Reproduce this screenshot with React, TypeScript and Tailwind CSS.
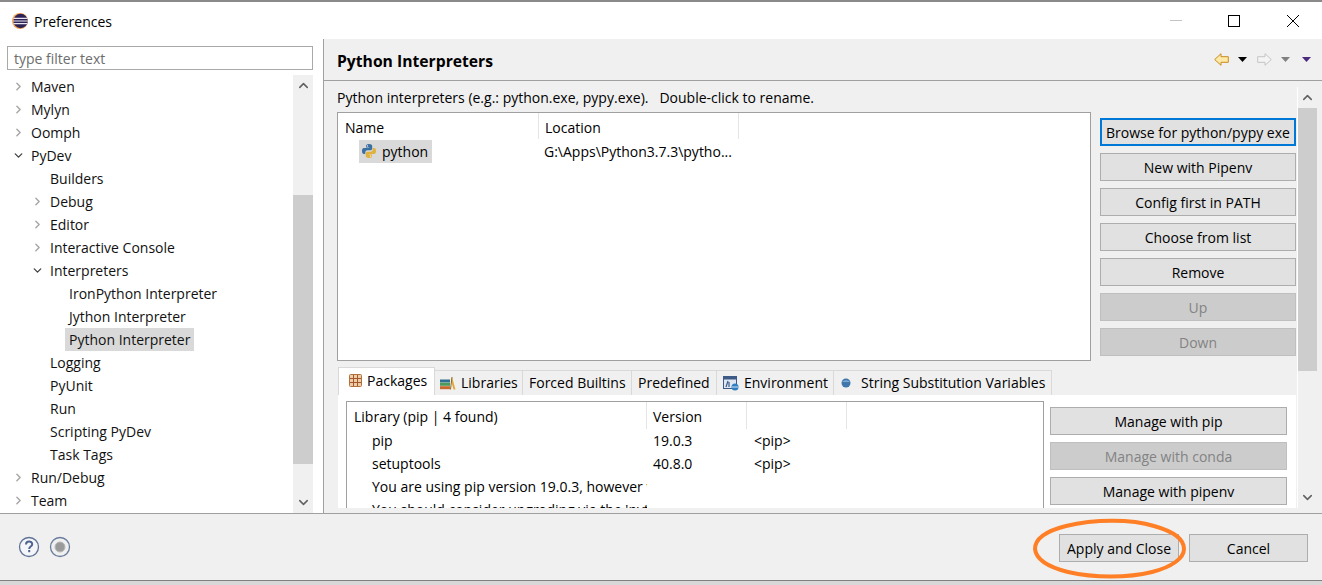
import { ChevronDown, ChevronRight, ChevronUp } from "lucide-react";
import type { ReactNode } from "react";

const FONT = "font-['Open_Sans','Liberation_Sans',sans-serif]";

type TreeRow = { label: string; depth: 0 | 1 | 2; arrow?: "closed" | "open"; selected?: boolean };

const tree: TreeRow[] = [
  { label: "Maven", depth: 0, arrow: "closed" },
  { label: "Mylyn", depth: 0, arrow: "closed" },
  { label: "Oomph", depth: 0, arrow: "closed" },
  { label: "PyDev", depth: 0, arrow: "open" },
  { label: "Builders", depth: 1 },
  { label: "Debug", depth: 1, arrow: "closed" },
  { label: "Editor", depth: 1, arrow: "closed" },
  { label: "Interactive Console", depth: 1, arrow: "closed" },
  { label: "Interpreters", depth: 1, arrow: "open" },
  { label: "IronPython Interpreter", depth: 2 },
  { label: "Jython Interpreter", depth: 2 },
  { label: "Python Interpreter", depth: 2, selected: true },
  { label: "Logging", depth: 1 },
  { label: "PyUnit", depth: 1 },
  { label: "Run", depth: 1 },
  { label: "Scripting PyDev", depth: 1 },
  { label: "Task Tags", depth: 1 },
  { label: "Run/Debug", depth: 0, arrow: "closed" },
  { label: "Team", depth: 0, arrow: "closed" },
];

const depthPad = { 0: "pl-[12px]", 1: "pl-[31px]", 2: "pl-[65px]" };

function Btn({ label, className, disabled, focused }: { label: string; className?: string; disabled?: boolean; focused?: boolean }) {
  return (
    <div
      className={
        "flex h-[28px] shrink-0 items-center justify-center whitespace-nowrap pt-[2px] " +
        (focused
          ? "border-2 border-[#0078d7] bg-[#e1e1e1] text-black "
          : disabled
            ? "border border-[#bfbfbf] bg-[#cccccc] text-[#838383] "
            : "border border-[#adadad] bg-[#e1e1e1] text-black ") +
        (className ?? "")
      }
    >
      {label}
    </div>
  );
}

function EclipseIcon() {
  return (
    <svg width="18" height="18" viewBox="0 0 18 18" className="shrink-0">
      <circle cx="9" cy="9" r="8" fill="#f0a050" />
      <circle cx="9.6" cy="9" r="7.2" fill="#2c2255" />
      <path d="M2.5 6.4h14M2 9h15M2.5 11.6h14" stroke="#e8e6f0" strokeWidth="1.1" />
    </svg>
  );
}

function PythonIcon() {
  return (
    <svg width="16" height="16" viewBox="0 0 16 16" className="shrink-0">
      <path d="M8 1C5.5 1 5 2 5 3v1.500h3.200V5H3C1.700 5 1 6.200 1 8s.7 3 2 3h1.300V9.300C4.300 8 5.300 7.300 6.500 7.300h3c1 0 1.700-.7 1.700-1.700V3c0-1.200-1.200-2-3.200-2z" fill="#3b6f9f" />
      <path d="M8 15c2.500 0 3-1 3-2v-1.500H7.800V11H13c1.300 0 2-1.200 2-3s-.7-3-2-3h-1.300v1.700c0 1.300-1 2-2.200 2h-3c-1 0-1.700.7-1.700 1.700V13c0 1.200 1.200 2 3.200 2z" fill="#e0b23c" />
      <circle cx="6.400" cy="2.900" r=".7" fill="#fff" />
      <circle cx="9.600" cy="13.100" r=".7" fill="#fff" />
    </svg>
  );
}

function PackagesIcon() {
  return (
    <svg width="13" height="13" viewBox="0 0 13 13" className="shrink-0">
      <rect x=".5" y=".5" width="12" height="12" rx="1" fill="#eccfa8" stroke="#b5713c" />
      <path d="M4.500 1v11M8.500 1v11M1 4.500h11M1 8.500h11" stroke="#a5562c" strokeWidth="1" />
    </svg>
  );
}

function LibrariesIcon() {
  return (
    <svg width="16" height="14" viewBox="0 0 16 14" className="shrink-0">
      <rect x="0" y="3.500" width="10" height="3" fill="#2f6f8f" />
      <rect x="0" y="6.800" width="10" height="3" fill="#4e9a5a" />
      <rect x="0" y="10.200" width="10" height="3" fill="#c8682c" />
      <path d="M12 1l3.500 12.500h-2L11 4.500z" fill="#e2a93a" />
      <path d="M10.500 13.500L12 1" stroke="#8a6a2a" strokeWidth="1" />
    </svg>
  );
}

function EnvironmentIcon() {
  return (
    <svg width="16" height="15" viewBox="0 0 16 15" className="shrink-0">
      <rect x=".5" y=".5" width="13" height="12" fill="#dfe7f2" stroke="#3e5a86" />
      <rect x="1" y="1" width="12" height="2.500" fill="#3e5a86" />
      <path d="M3 11l2-6M6 11V6" stroke="#3e5a86" strokeWidth="1.200" />
      <circle cx="12" cy="11" r="3.500" fill="#2f7fc0" />
      <path d="M9 11h6" stroke="#cfe4f5" />
    </svg>
  );
}

function DotIcon() {
  return (
    <svg width="12" height="12" viewBox="0 0 12 12" className="shrink-0">
      <circle cx="6" cy="6" r="4.500" fill="#3f77ad" />
      <path d="M2 5a4.500 3 0 0 1 8 0z" fill="#7fa9d0" />
    </svg>
  );
}

function Triangle({ className }: { className: string }) {
  return (
    <svg width="9" height="5" viewBox="0 0 9 5" className="shrink-0">
      <path d="M0 0h9L4.500 5z" className={className} />
    </svg>
  );
}

function ScrollBar({ thumbBefore, thumbHeight, className }: { thumbBefore: string; thumbHeight: string; className: string }) {
  return (
    <div className={"flex flex-col bg-[#f0f0f0] " + className}>
      <div className={"flex shrink-0 flex-col items-center " + thumbBefore}>
        <ChevronUp size={15} strokeWidth={2.4} className="mt-[3px] text-[#606060]" />
      </div>
      <div className={"shrink-0 bg-[#cdcdcd] " + thumbHeight} />
      <div className="flex flex-1 items-end justify-center pb-[3px]">
        <ChevronDown size={15} strokeWidth={2.4} className="text-[#606060]" />
      </div>
    </div>
  );
}

function TreeItem({ row }: { row: TreeRow }) {
  return (
    <div className={"flex h-[23px] items-center whitespace-nowrap text-[#111] " + depthPad[row.depth]}>
      {row.depth < 2 && (
        <span className="flex w-[19px] shrink-0 items-center">
          {row.arrow === "closed" && <ChevronRight size={13} strokeWidth={2.6} className="text-[#a6a6a6]" />}
          {row.arrow === "open" && <ChevronDown size={13} strokeWidth={2.4} className="text-[#404040]" />}
        </span>
      )}
      <span className={row.selected ? "flex h-[23px] items-center bg-[#d9d9d9] px-[4px]" : row.depth === 2 ? "px-[4px]" : ""}>{row.label}</span>
    </div>
  );
}

function TabLabel({ icon, label, className }: { icon?: ReactNode; label: string; className: string }) {
  return (
    <div className={"flex h-[25px] items-center gap-[5px] whitespace-nowrap border border-b-0 border-l-0 border-[#d9d9d9] bg-[#f0f0f0] " + className}>
      {icon}
      {label}
    </div>
  );
}

export default function App() {
  return (
    <div className={"relative flex h-[585px] w-[1322px] flex-col overflow-hidden bg-white text-[14px] leading-[20px] text-black " + FONT}>
      {/* window title */}
      <div className="h-[2px] shrink-0 bg-[#8a8a8a]" />
      <div className="flex h-[37px] shrink-0 items-center pl-[11px]">
        <EclipseIcon />
        <span className="ml-[5px] pt-[2px]">Preferences</span>
        <div className="ml-auto flex items-center">
          <div className="mr-[46px] h-px w-[12px] bg-[#c4c4c4]" />
          <div className="mr-[47px] h-[12px] w-[12px] border border-black" />
          <svg width="12" height="12" viewBox="0 0 12 12" className="mr-[23px]">
            <path d="M0 0l12 12M12 0L0 12" stroke="#000" strokeWidth="1" />
          </svg>
        </div>
      </div>

      {/* body */}
      <div className="flex h-[474px] shrink-0">
        <div className="flex w-[324px] shrink-0 flex-col border-r border-[#a0a0a0] pl-[7px] pr-[10px] pt-[7px]">
          <div className="flex h-[24px] shrink-0 items-center border border-[#a9a9a9] pl-[6px] pt-[2px] text-[#6d6d6d]">type filter text</div>
          <div className="-ml-[7px] mt-[5px] flex min-h-0 flex-1">
            <div className="flex-1 overflow-hidden">
              {tree.map((row) => (
                <TreeItem key={row.label} row={row} />
              ))}
            </div>
            <ScrollBar className="w-[20px]" thumbBefore="h-[120px]" thumbHeight="h-[269px]" />
          </div>
        </div>

        <div className="flex min-w-0 flex-1 flex-col bg-[#f0f0f0]">
          <div className="flex h-[42px] shrink-0 items-center border-b border-[#a0a0a0] pl-[13px]">
            <span className="pt-[2px] text-[15.7px] font-bold">Python Interpreters</span>
            <div className="ml-auto mr-[11px] flex items-center">
              <svg width="15" height="13" viewBox="0 0 15 13">
                <path d="M.7 6.500L7 .7v3h7.300v5.600H7v3z" fill="#ffe9a6" stroke="#c98a20" />
              </svg>
              <div className="ml-[9px]"><Triangle className="fill-black" /></div>
              <svg width="15" height="13" viewBox="0 0 15 13" className="ml-[10px]">
                <path d="M14.300 6.500L8 .7v3H.7v5.600H8v3z" fill="#f4f4f4" stroke="#c4c4c4" />
              </svg>
              <div className="ml-[9px]"><Triangle className="fill-[#808080]" /></div>
              <div className="ml-[12px]"><Triangle className="fill-[#4b2a7e]" /></div>
            </div>
          </div>

          <div className="flex min-h-0 flex-1">
            <div className="w-[973px] shrink-0 pl-[13px]">
              <div className="flex h-[31px] items-center pt-[3px]">Python interpreters (e.g.: python.exe, pypy.exe).&nbsp;&nbsp; Double-click to rename.</div>
              <div className="flex h-[249px] gap-[9px]">
                <div className="w-[754px] shrink-0 border border-[#a0a0a0] bg-white">
                  <div className="flex h-[26px]">
                    <div className="flex w-[201px] items-center border-r border-[#e5e5e5] pl-[7px] pt-[4px]">Name</div>
                    <div className="flex w-[200px] items-center border-r border-[#e5e5e5] pl-[6px] pt-[4px]">Location</div>
                  </div>
                  <div className="flex h-[24px] items-center">
                    <div className="w-[201px] pl-[21px]">
                      <div className="flex h-[23px] w-[73px] items-center gap-[5px] bg-[#d9d9d9] pl-[2px]">
                        <PythonIcon />
                        <span className="pt-[2px]">python</span>
                      </div>
                    </div>
                    <div className="pl-[5px] pt-[2px]">G:\Apps\Python3.7.3\pytho...</div>
                  </div>
                </div>
                <div className="flex w-[196px] shrink-0 flex-col gap-[7px] pt-[6px]">
                  <Btn label="Browse for python/pypy exe" focused />
                  <Btn label="New with Pipenv" />
                  <Btn label="Config first in PATH" />
                  <Btn label="Choose from list" />
                  <Btn label="Remove" />
                  <Btn label="Up" disabled />
                  <Btn label="Down" disabled />
                </div>
              </div>

              {/* tabs */}
              <div className="ml-px mt-[6px] flex h-[28px] items-end">
                <div className="flex h-[28px] w-[97px] items-center gap-[5px] whitespace-nowrap border border-b-0 border-[#d9d9d9] bg-white pb-[2px] pl-[10px]">
                  <PackagesIcon />
                  Packages
                </div>
                <TabLabel className="w-[88px] pl-[5px]" icon={<LibrariesIcon />} label="Libraries" />
                <TabLabel className="w-[109px] pl-[6px]" label="Forced Builtins" />
                <TabLabel className="w-[85px] pl-[6px]" label="Predefined" />
                <TabLabel className="w-[117px] pl-[6px]" icon={<EnvironmentIcon />} label="Environment" />
                <TabLabel className="w-[218px] gap-[9px] pl-[6px]" icon={<DotIcon />} label="String Substitution Variables" />
              </div>
              <div className="ml-px flex h-[113px] w-[958px] gap-[6px] overflow-hidden bg-white pl-[8px] pt-[6px]">
                <div className="h-[130px] w-[698px] shrink-0 border border-[#a0a0a0]">
                  <div className="flex h-[27px]">
                    <div className="flex w-[300px] items-center border-r border-[#e5e5e5] pl-[7px] pt-[3px]">Library (pip | 4 found)</div>
                    <div className="flex w-[100px] items-center border-r border-[#e5e5e5] pl-[6px] pt-[3px]">Version</div>
                    <div className="w-[100px] border-r border-[#e5e5e5]" />
                  </div>
                  {[
                    ["pip", "19.0.3", "<pip>"],
                    ["setuptools", "40.8.0", "<pip>"],
                    ["You are using pip version 19.0.3, however version 19.1.1 is available.", "", ""],
                    ["You should consider upgrading via the 'python -m pip install' command.", "", ""],
                  ].map(([name, version, kind]) => (
                    <div key={name} className="flex h-[23px] items-center whitespace-nowrap pt-px">
                      <div className="w-[300px] overflow-hidden pl-[25px]">{name}</div>
                      <div className="w-[100px] pl-[6px]">{version}</div>
                      <div className="pl-[7px]">{kind}</div>
                    </div>
                  ))}
                </div>
                <div className="flex w-[237px] shrink-0 flex-col gap-[7px] pt-[6px]">
                  <Btn label="Manage with pip" />
                  <Btn label="Manage with conda" disabled />
                  <Btn label="Manage with pipenv" />
                </div>
              </div>
            </div>

            <div className="mt-[6px] h-[421px] w-px shrink-0 bg-white" />
            <ScrollBar className="mt-[6px] h-[421px] w-[19px] shrink-0" thumbBefore="h-[21px]" thumbHeight="h-[263px]" />
          </div>
        </div>
      </div>

      {/* footer */}
      <div className="flex h-[68px] shrink-0 items-center border-y border-[#a0a0a0] border-b-[#808080] bg-[#f0f0f0] pl-[18px] pr-[14px]">
        <svg width="22" height="22" viewBox="0 0 22 22">
          <circle cx="11" cy="11" r="9.500" fill="#f4f6fa" stroke="#5f7396" strokeWidth="1.300" />
          <path d="M8 8.500c0-4 6.200-4 6.200-.3 0 2.400-3 2.300-3 4.700" fill="none" stroke="#4f6590" strokeWidth="2" />
          <rect x="10.200" y="14" width="2" height="2.200" fill="#4f6590" />
        </svg>
        <svg width="22" height="22" viewBox="0 0 22 22" className="ml-[9px]">
          <circle cx="11" cy="11" r="9.500" fill="#f0f0f0" stroke="#6b7d9c" strokeWidth="1.300" />
          <circle cx="11" cy="11" r="5" fill="#9a9a9a" stroke="#b8b8b8" />
        </svg>
        <Btn label="Apply and Close" className="ml-auto mt-[2px] w-[120px]" />
        <Btn label="Cancel" className="ml-[10px] mt-[2px] w-[119px]" />
      </div>
      <div className="flex-1 bg-[#d8d8d8]" />

      {/* hand-drawn highlight over the Apply button */}
      <svg width="156" height="62" viewBox="0 0 156 62" className="absolute left-[1032px] top-[518px]">
        <path
          d="M34 8C62 1 100 1 122 8c18 5 30 13 30 23 0 9-12 18-32 23-24 6-58 6-84 0C16 49 4 41 3 31 3 21 14 13 34 8z"
          fill="none"
          stroke="#ff7f27"
          strokeWidth="4"
        />
      </svg>
    </div>
  );
}
